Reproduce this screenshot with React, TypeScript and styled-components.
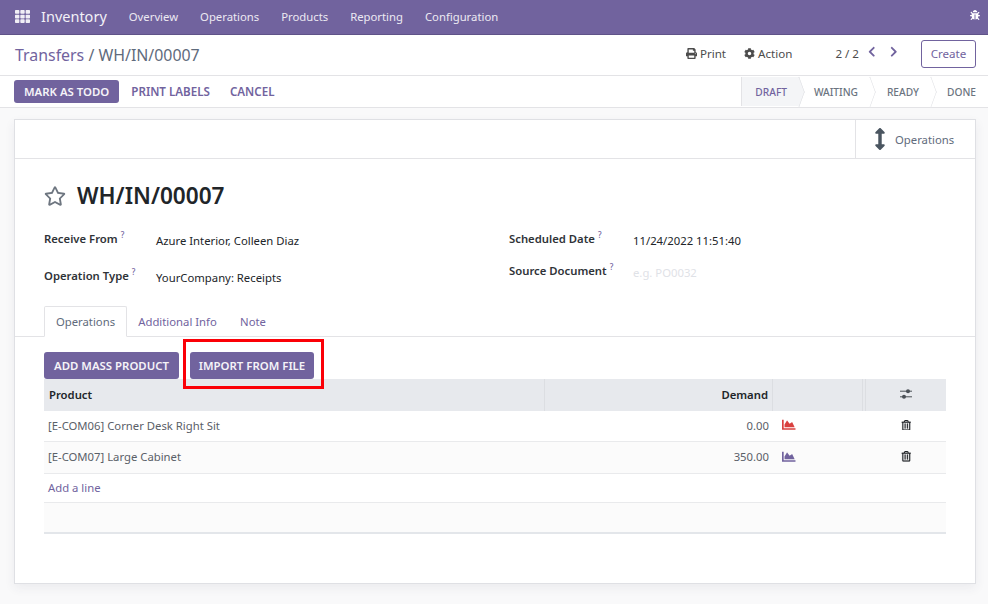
import React from 'react';
import styled, { createGlobalStyle } from 'styled-components';
import {
  FaTh,
  FaBug,
  FaPrint,
  FaCog,
  FaChevronLeft,
  FaChevronRight,
  FaArrowsAltV,
  FaRegStar,
  FaChartArea,
  FaRegTrashAlt,
} from 'react-icons/fa';

const PURPLE = '#71639e';

const GlobalStyle = createGlobalStyle`
  * {
    margin: 0;
    padding: 0;
    box-sizing: border-box;
  }
  html, body {
    height: 100%;
    overflow: hidden;
  }
  body {
    font-family: "Noto Sans", "Open Sans", sans-serif;
    font-size: 12px;
    color: #4c4c4c;
    background-color: #f9f9fa;
  }
`;

const Page = styled.div`
  display: flex;
  flex-direction: column;
  height: 604px;
`;

const NavBar = styled.header`
  display: flex;
  align-items: center;
  height: 35px;
  padding: 0 8px 1px 15px;
  background-color: ${PURPLE};
  border-bottom: 1px solid #5f5388;
  color: #fff;
`;

const AppsIcon = styled(FaTh)`
  font-size: 15px;
  margin-right: 11px;
  color: #f0eef5;
`;

const Brand = styled.span`
  font-size: 14.5px;
  color: #f3f1f7;
  margin-right: 22px;
  padding-bottom: 2px;
`;

const NavLink = styled.span`
  font-size: 11.3px;
  color: #ece9f2;
  margin-right: 22px;
`;

const BugIcon = styled(FaBug)`
  margin-left: auto;
  font-size: 10px;
  margin-top: -4px;
`;

const TitleRow = styled.div`
  display: flex;
  align-items: center;
  height: 41px;
  padding: 0 12px 3px 15px;
  background: #fff;
  border-bottom: 1px solid #e3e3e6;
`;

const Breadcrumb = styled.div`
  font-size: 15.9px;
  color: #5f6b7c;
  margin-top: 3px;
`;

const CrumbLink = styled.span`
  color: ${PURPLE};
`;

const ActionItem = styled.span<{ $first?: boolean }>`
  display: inline-flex;
  align-items: center;
  gap: 3px;
  font-size: 11.6px;
  color: #4c4c4c;
  margin-left: ${(p) => (p.$first ? 'auto' : '18px')};
  svg {
    font-size: 11px;
  }
`;

const Pager = styled.span`
  font-size: 11.6px;
  margin-left: 43px;
  margin-right: 7px;
`;

const PagerArrow = styled.span`
  display: inline-flex;
  color: ${PURPLE};
  font-size: 11.5px;
  margin-right: 10px;
  margin-top: -3px;
`;

const CreateButton = styled.button`
  width: 55px;
  height: 28px;
  margin-left: 12px;
  background: #fff;
  border: 1px solid ${PURPLE};
  border-radius: 3px;
  color: ${PURPLE};
  font: inherit;
  font-size: 11.6px;
`;

const ActionRow = styled.div`
  display: flex;
  align-items: center;
  height: 32px;
  padding-left: 14px;
  background: #fff;
  border-bottom: 1px solid #e3e3e6;
`;

const PrimaryButton = styled.button`
  height: 23px;
  padding: 0 10px;
  background: ${PURPLE};
  border: none;
  border-radius: 3px;
  color: #f5f3f8;
  font: inherit;
  font-size: 11.4px;
  font-weight: 600;
`;

const LinkButton = styled.span`
  font-size: 11.6px;
  font-weight: 600;
  color: ${PURPLE};
  margin-left: 12px;
  margin-right: 8px;
`;

const StatusBar = styled.div`
  display: flex;
  align-self: stretch;
  margin-left: auto;
  margin-right: 12px;
  padding: 1px 0;
`;

const Step = styled.div<{ $width: number; $active?: boolean; $last?: boolean }>`
  position: relative;
  display: flex;
  align-items: center;
  justify-content: flex-end;
  width: ${(p) => p.$width}px;
  padding-right: ${(p) => (p.$last ? 0 : 13)}px;
  font-size: 10.2px;
  font-weight: 500;
  color: ${(p) => (p.$active ? PURPLE : '#6b7480')};
  background: ${(p) => (p.$active ? '#f4f5f7' : 'transparent')};
  border-left: ${(p) => (p.$active ? '1px solid #e3e3e6' : 'none')};
  &::after {
    content: '';
    display: ${(p) => (p.$last ? 'none' : 'block')};
    position: absolute;
    top: 4px;
    right: -10px;
    width: 21px;
    height: 21px;
    transform: scaleX(0.36) rotate(45deg);
    background: ${(p) => (p.$active ? '#f4f5f7' : '#fff')};
    border-top: 1px solid #dcdde1;
    border-right: 1px solid #dcdde1;
    z-index: 1;
  }
`;

const StepLabel = styled.span`
  position: relative;
  z-index: 2;
`;

const Content = styled.main`
  flex: 1;
  padding: 11px 12px 0 14px;
`;

const Sheet = styled.section`
  height: 465px;
  background: #fff;
  border: 1px solid #dfe0e4;
  box-shadow: 0 4px 10px rgba(60, 60, 80, 0.07);
`;

const ButtonBox = styled.div`
  display: flex;
  justify-content: flex-end;
  height: 39px;
  border-bottom: 1px solid #e3e3e6;
`;

const StatButton = styled.div`
  display: flex;
  align-items: center;
  width: 120px;
  padding-left: 14px;
  gap: 4px;
  border-left: 1px solid #e3e3e6;
  font-size: 11.3px;
  color: #5f6b7c;
  svg {
    font-size: 22px;
    color: #4a5560;
    margin-left: -1px;
  }
`;

const TitleBlock = styled.div`
  display: flex;
  align-items: center;
  gap: 11px;
  height: 72px;
  padding: 1px 0 0 29px;
`;

const Star = styled(FaRegStar)`
  font-size: 22px;
  color: #6e7680;
`;

const DocName = styled.h1`
  font-size: 22.6px;
  line-height: 30px;
  font-weight: 600;
  color: #212529;
`;

const FormGrid = styled.div`
  display: grid;
  grid-template-columns: 465px 1fr;
  padding-left: 29px;
`;

const FieldColumn = styled.div`
  display: flex;
  flex-direction: column;
`;

const Field = styled.div<{ $height: number }>`
  display: flex;
  height: ${(p) => p.$height}px;
`;

const FieldLabel = styled.label<{ $width: number }>`
  width: ${(p) => p.$width}px;
  font-size: 11.3px;
  font-weight: 600;
  line-height: 16px;
  color: #2f3338;
`;

const Help = styled.sup`
  font-size: 8px;
  font-weight: 500;
  color: ${PURPLE};
  margin-left: 3px;
  line-height: 0;
`;

const FieldValue = styled.span<{ $muted?: boolean }>`
  font-size: 11.3px;
  line-height: 16px;
  margin-top: 2px;
  color: ${(p) => (p.$muted ? '#dfe2e7' : '#212529')};
`;

const TabBar = styled.nav`
  display: flex;
  align-items: flex-end;
  height: 31px;
  margin-top: 1px;
  padding-left: 29px;
  border-bottom: 1px solid #e3e3e6;
`;

const Tab = styled.div<{ $active?: boolean; $width: number }>`
  display: flex;
  align-items: center;
  justify-content: center;
  width: ${(p) => p.$width}px;
  height: 31px;
  font-size: 11.3px;
  margin-bottom: -1px;
  color: ${(p) => (p.$active ? '#5f6b7c' : PURPLE)};
  background: ${(p) => (p.$active ? '#fff' : 'transparent')};
  border: 1px solid ${(p) => (p.$active ? '#e3e3e6' : 'transparent')};
  border-bottom-color: ${(p) => (p.$active ? '#fff' : 'transparent')};
  border-radius: 2px 2px 0 0;
`;

const TabPane = styled.div`
  padding: 15px 29px 0;
`;

const ButtonRow = styled.div`
  display: flex;
  gap: 11px;
`;

const TallButton = styled(PrimaryButton)<{ $width: number }>`
  width: ${(p) => p.$width}px;
  height: 27px;
  padding: 0;
`;

const Highlighted = styled.div`
  position: relative;
  display: flex;
`;

const RedBox = styled.div`
  position: absolute;
  left: -7px;
  top: -13px;
  width: 141px;
  height: 50px;
  border: 3px solid #fb0007;
  z-index: 3;
`;

const Table = styled.div`
  display: flex;
  flex-direction: column;
  border-bottom: 2px solid #e3e6ea;
`;

const Row = styled.div<{ $height: number; $head?: boolean; $alt?: boolean; $line?: boolean }>`
  display: grid;
  grid-template-columns: 501px 228px 90px 3px 1fr;
  align-items: stretch;
  height: ${(p) => p.$height}px;
  color: ${(p) => (p.$head ? '#212529' : '#5a6068')};
  font-weight: ${(p) => (p.$head ? 600 : 400)};
  background: ${(p) => (p.$head ? '#e7e9ed' : p.$alt ? '#fbfbfb' : '#fff')};
  border-bottom: ${(p) => (p.$line ? '1px solid #e9eaec' : 'none')};
`;

const Cell = styled.div<{ $divider?: boolean; $right?: boolean; $center?: boolean; $inset?: boolean }>`
  display: flex;
  align-items: center;
  justify-content: ${(p) => (p.$right ? 'flex-end' : p.$center ? 'center' : 'flex-start')};
  padding: 0 ${(p) => (p.$center ? 0 : p.$right ? 4 : 3)}px 2px ${(p) => (p.$center ? 0 : p.$inset ? 5 : 4)}px;
  font-size: 11.3px;
  border-right: ${(p) => (p.$divider ? '1px solid #dcdee2' : 'none')};
`;

const GapCell = styled.div<{ $divider?: boolean }>`
  border-right: ${(p) => (p.$divider ? '1px solid #dcdee2' : 'none')};
`;

const Chart = styled(FaChartArea)<{ $color: string }>`
  font-size: 13.5px;
  margin-left: 5px;
  color: ${(p) => p.$color};
`;

const Trash = styled(FaRegTrashAlt)`
  font-size: 10.5px;
  color: #212529;
  stroke: currentColor;
  stroke-width: 10;
`;

const SlidersIcon = styled.svg`
  width: 14px;
  height: 12px;
  stroke: #4a5056;
  fill: #4a5056;
`;

const AddLine = styled.span`
  color: ${PURPLE};
`;

const products = [
  { name: '[E-COM06] Corner Desk Right Sit', demand: '0.00', color: '#d9403f' },
  { name: '[E-COM07] Large Cabinet', demand: '350.00', color: PURPLE },
];

const App: React.FC = () => {
  return (
    <>
      <GlobalStyle />
      <Page>
        <NavBar>
          <AppsIcon />
          <Brand>Inventory</Brand>
          {['Overview', 'Operations', 'Products', 'Reporting', 'Configuration'].map((item) => (
            <NavLink key={item}>{item}</NavLink>
          ))}
          <BugIcon />
        </NavBar>

        <TitleRow>
          <Breadcrumb>
            <CrumbLink>Transfers</CrumbLink> / WH/IN/00007
          </Breadcrumb>
          <ActionItem $first>
            <FaPrint /> Print
          </ActionItem>
          <ActionItem>
            <FaCog /> Action
          </ActionItem>
          <Pager>2 / 2</Pager>
          <PagerArrow>
            <FaChevronLeft />
          </PagerArrow>
          <PagerArrow>
            <FaChevronRight />
          </PagerArrow>
          <CreateButton>Create</CreateButton>
        </TitleRow>

        <ActionRow>
          <PrimaryButton>MARK AS TODO</PrimaryButton>
          <LinkButton>PRINT LABELS</LinkButton>
          <LinkButton>CANCEL</LinkButton>
          <StatusBar>
            <Step $width={59} $active>
              <StepLabel>DRAFT</StepLabel>
            </Step>
            <Step $width={71}>
              <StepLabel>WAITING</StepLabel>
            </Step>
            <Step $width={61}>
              <StepLabel>READY</StepLabel>
            </Step>
            <Step $width={44} $last>
              <StepLabel>DONE</StepLabel>
            </Step>
          </StatusBar>
        </ActionRow>

        <Content>
          <Sheet>
            <ButtonBox>
              <StatButton>
                <FaArrowsAltV /> Operations
              </StatButton>
            </ButtonBox>

            <TitleBlock>
              <Star />
              <DocName>WH/IN/00007</DocName>
            </TitleBlock>

            <FormGrid>
              <FieldColumn>
                <Field $height={37}>
                  <FieldLabel $width={112}>
                    Receive From<Help>?</Help>
                  </FieldLabel>
                  <FieldValue>Azure Interior, Colleen Diaz</FieldValue>
                </Field>
                <Field $height={37}>
                  <FieldLabel $width={112}>
                    Operation Type<Help>?</Help>
                  </FieldLabel>
                  <FieldValue>YourCompany: Receipts</FieldValue>
                </Field>
              </FieldColumn>
              <FieldColumn>
                <Field $height={32}>
                  <FieldLabel $width={124}>
                    Scheduled Date<Help>?</Help>
                  </FieldLabel>
                  <FieldValue>11/24/2022 11:51:40</FieldValue>
                </Field>
                <Field $height={32}>
                  <FieldLabel $width={124}>
                    Source Document<Help>?</Help>
                  </FieldLabel>
                  <FieldValue $muted>e.g. PO0032</FieldValue>
                </Field>
              </FieldColumn>
            </FormGrid>

            <TabBar>
              <Tab $active $width={83}>
                Operations
              </Tab>
              <Tab $width={101}>Additional Info</Tab>
              <Tab $width={50}>Note</Tab>
            </TabBar>

            <TabPane>
              <ButtonRow>
                <TallButton $width={135}>ADD MASS PRODUCT</TallButton>
                <Highlighted>
                  <RedBox />
                  <TallButton $width={124}>IMPORT FROM FILE</TallButton>
                </Highlighted>
              </ButtonRow>

              <Table>
                <Row $head $height={32}>
                  <Cell $divider $inset>
                    Product
                  </Cell>
                  <Cell $divider $right>
                    Demand
                  </Cell>
                  <GapCell $divider />
                  <GapCell $divider />
                  <Cell $center>
                    <SlidersIcon viewBox="0 0 14 12">
                      <line x1="1" y1="3.2" x2="13" y2="3.2" strokeWidth="1" />
                      <line x1="1" y1="8.8" x2="13" y2="8.8" strokeWidth="1" />
                      <circle cx="9" cy="3.2" r="2" stroke="none" />
                      <circle cx="5" cy="8.8" r="2" stroke="none" />
                    </SlidersIcon>
                  </Cell>
                </Row>
                {products.map((p, i) => (
                  <Row key={p.name} $height={i === 0 ? 31 : 32} $alt={i === 1} $line>
                    <Cell>{p.name}</Cell>
                    <Cell $right>{p.demand}</Cell>
                    <Cell>
                      <Chart $color={p.color} />
                    </Cell>
                    <GapCell />
                    <Cell $center>
                      <Trash />
                    </Cell>
                  </Row>
                ))}
                <Row $height={29} $line>
                  <Cell>
                    <AddLine>Add a line</AddLine>
                  </Cell>
                </Row>
                <Row $height={29} $alt />
              </Table>
            </TabPane>
          </Sheet>
        </Content>
      </Page>
    </>
  );
};

export default App;
